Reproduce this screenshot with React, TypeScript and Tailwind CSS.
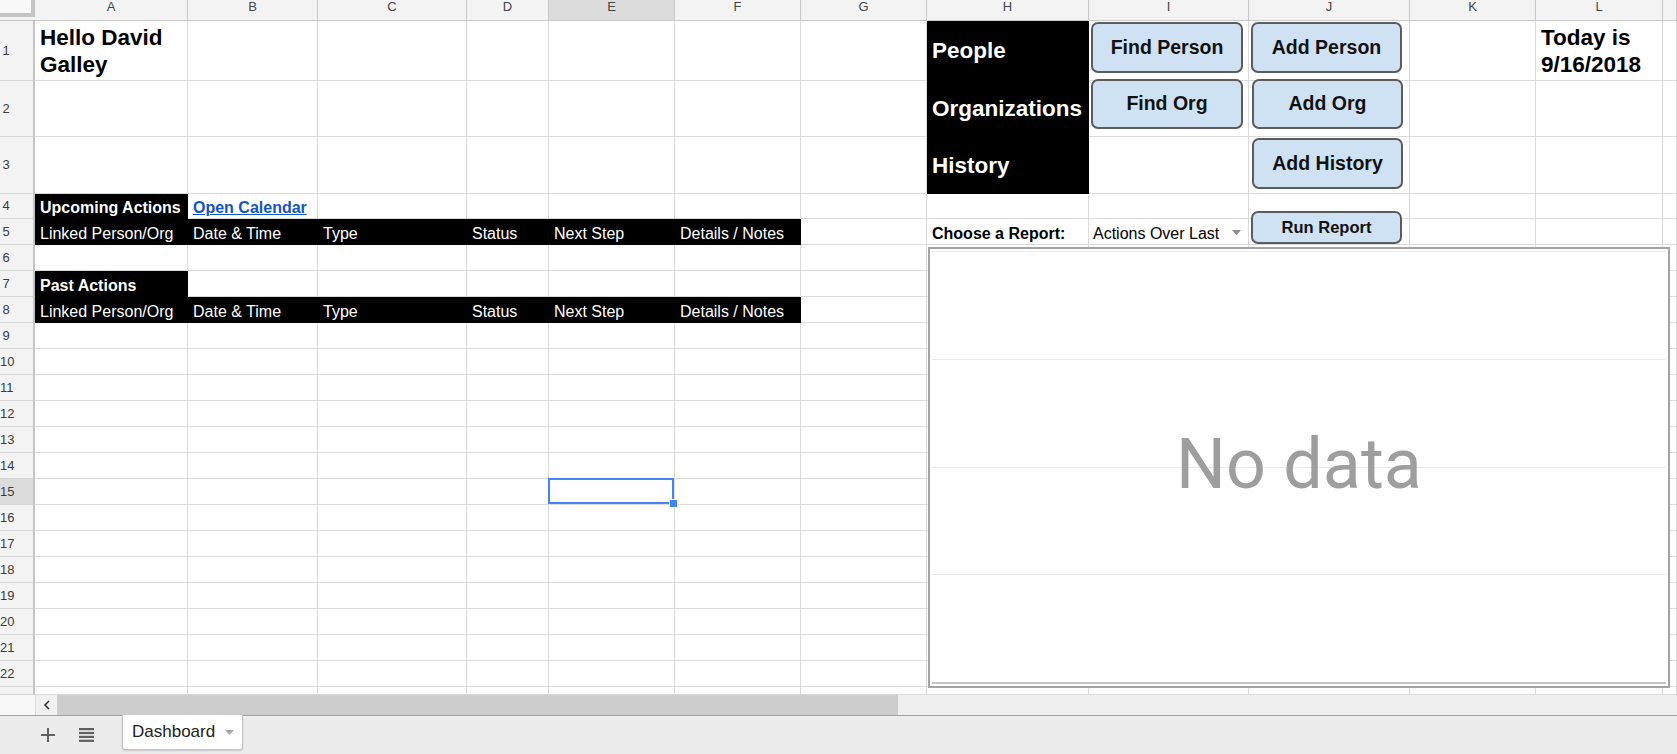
import React from 'react';

type Kind = 'plain' | 'black' | 'blackBold' | 'big' | 'side' | 'link' | 'bold' | 'select';

interface CellDef {
  kind: Kind;
  text?: React.ReactNode;
}

const LETTERS = ['', 'A', 'B', 'C', 'D', 'E', 'F', 'G', 'H', 'I', 'J', 'K', 'L', ''];
const HEADINGS = ['Linked Person/Org', 'Date & Time', 'Type', 'Status', 'Next Step', 'Details / Notes'];

const cells: Record<string, CellDef> = {
  '1-1': { kind: 'big', text: <>Hello David<br />Galley</> },
  '1-8': { kind: 'side', text: 'People' },
  '2-8': { kind: 'side', text: 'Organizations' },
  '3-8': { kind: 'side', text: 'History' },
  '1-12': { kind: 'big', text: <>Today is<br />9/16/2018</> },
  '4-1': { kind: 'blackBold', text: 'Upcoming Actions' },
  '4-2': { kind: 'link', text: 'Open Calendar' },
  '7-1': { kind: 'blackBold', text: 'Past Actions' },
  '5-8': { kind: 'bold', text: 'Choose a Report:' },
  '5-9': { kind: 'select', text: 'Actions Over Last' },
};
HEADINGS.forEach((h, i) => {
  cells[`5-${i + 1}`] = { kind: 'black', text: h };
  cells[`8-${i + 1}`] = { kind: 'black', text: h };
});

const kindClass: Record<Kind, string> = {
  plain: 'border-[#dadada] bg-white',
  black: 'border-black bg-black text-white items-end px-[5px] pb-[2px] text-[16px] leading-[16px]',
  blackBold: 'border-black bg-black text-white items-end px-[5px] pb-[2px] text-[16px] leading-[16px] font-bold',
  big: 'border-[#dadada] bg-white text-black items-end px-[5px] pb-[2px] text-[22.5px] leading-[27px] font-bold',
  side: 'border-black bg-black text-white items-center px-[5px] pt-[2px] text-[22.5px] leading-none font-bold',
  link: 'border-[#dadada] bg-white text-[#1155cc] underline items-end px-[5px] pb-[2px] text-[16px] leading-[16px] font-bold',
  bold: 'border-[#dadada] bg-white text-black items-end px-[5px] pb-[2px] text-[16px] leading-[16px] font-bold',
  select: 'border-[#dadada] bg-white text-black items-end justify-between pl-[4px] pr-[7px] pb-[2px] text-[16px] leading-[16px]',
};

const buttons = [
  { label: 'Find Person', cls: 'left-[1091px] top-[22px] h-[51px] w-[152px] text-[19.5px]' },
  { label: 'Add Person', cls: 'left-[1251px] top-[22px] h-[51px] w-[151px] text-[19.5px]' },
  { label: 'Find Org', cls: 'left-[1091px] top-[79px] h-[50px] w-[152px] text-[19.5px]' },
  { label: 'Add Org', cls: 'left-[1252px] top-[79px] h-[50px] w-[151px] text-[19.5px]' },
  { label: 'Add History', cls: 'left-[1252px] top-[138px] h-[51px] w-[151px] text-[19.5px]' },
  { label: 'Run Report', cls: 'left-[1251px] top-[211px] h-[33px] w-[151px] text-[16.5px]' },
];

function GridCell({ r, c }: { r: number; c: number }) {
  if (r === 0 && c === 0) {
    return (
      <div className="border-b border-[#c4c4c4] bg-[#f3f3f3]">
        <div className="h-[17px] w-[35px] border-r-4 border-b-4 border-[#c4c4c4] bg-[#f8f8f8]" />
      </div>
    );
  }
  if (r === 0) {
    return (
      <div
        className={`border-r border-b border-[#c8c8c8] text-center text-[13px] leading-[13px] text-[#444] ${
          c === 5 ? 'bg-[#dcdcdc]' : 'bg-[#f3f3f3]'
        }`}
      >
        {LETTERS[c]}
      </div>
    );
  }
  if (c === 0) {
    return (
      <div
        className={`flex items-center border-r-2 border-b border-r-[#c4c4c4] border-b-[#d6d6d6] text-[13px] text-[#3c3c3c] ${
          r === 15 ? 'bg-[#dcdcdc]' : 'bg-[#f3f3f3]'
        }`}
      >
        {r <= 22 && <span className="w-[12px] text-center">{r}</span>}
      </div>
    );
  }

  const def = cells[`${r}-${c}`] ?? { kind: 'plain' as Kind };
  return (
    <div className={`relative flex whitespace-nowrap border-r border-b ${kindClass[def.kind]}`}>
      {def.kind === 'select' ? (
        <>
          <span>{def.text}</span>
          <svg width="9" height="5" viewBox="0 0 9 5" className="mb-[7px]">
            <polygon points="0,0 9,0 4.5,5" fill="#8a8a8a" />
          </svg>
        </>
      ) : (
        <span>{def.text}</span>
      )}
      {r === 15 && c === 5 && (
        <>
          <div className="absolute -top-px -left-px right-0 bottom-0 z-10 border-2 border-[#4285f4]" />
          <div className="absolute -right-[4px] -bottom-[4px] z-10 h-[9px] w-[9px] border border-white bg-[#4285f4]" />
        </>
      )}
    </div>
  );
}

function Chart() {
  return (
    <div className="absolute left-[928px] top-[247px] h-[441px] w-[742px] border-2 border-[#a3a3a3] bg-white p-[2px]">
      <div className="flex h-full flex-col justify-between">
        <div className="h-px bg-[#ebebeb]" />
        <div className="h-px bg-[#ebebeb]" />
        <div className="h-px bg-[#ebebeb]" />
        <div className="h-px bg-[#ebebeb]" />
        <div className="h-[2px] bg-[#c4c4c4]" />
      </div>
      <div className="absolute inset-0 flex items-center justify-center pb-[7px] font-['Roboto',sans-serif] text-[70px] leading-none text-[#9e9e9e]">
        No data
      </div>
    </div>
  );
}

function Scrollbar() {
  return (
    <div className="flex h-[20px] shrink-0 bg-[#efefef]">
      <div className="w-[36px] border-r border-[#dcdcdc] bg-[#f8f8f8]" />
      <div className="flex w-[21px] items-center justify-center bg-[#f1f1f1]">
        <svg width="8" height="10" viewBox="0 0 8 10">
          <path d="M6 1 L2 5 L6 9" fill="none" stroke="#333" strokeWidth="1.6" />
        </svg>
      </div>
      <div className="w-[841px] bg-[#cdcdcd]" />
      <div className="flex-1" />
    </div>
  );
}

function TabBar() {
  return (
    <div className="flex h-[39px] shrink-0 items-center border-t border-[#a3a3a3] bg-[#ececec] pl-[41px]">
      <svg width="14" height="14" viewBox="0 0 14 14">
        <path d="M7 0 V14 M0 7 H14" stroke="#5f5f5f" strokeWidth="2" />
      </svg>
      <svg width="15" height="14" viewBox="0 0 15 14" className="ml-[24px]">
        <rect x="0" y="0" width="15" height="2.2" fill="#5f5f5f" />
        <rect x="0" y="3.9" width="15" height="2.2" fill="#5f5f5f" />
        <rect x="0" y="7.8" width="15" height="2.2" fill="#5f5f5f" />
        <rect x="0" y="11.7" width="15" height="2.2" fill="#5f5f5f" />
      </svg>
      <div className="-mt-px ml-[28px] flex h-[35px] w-[121px] items-center self-start rounded-b-[3px] border border-t-0 border-[#c4c4c4] bg-white pl-[9px] shadow-[0_1px_2px_rgba(0,0,0,0.15)]">
        <span className="text-[17px] text-[#222]">Dashboard</span>
        <svg width="9" height="5" viewBox="0 0 9 5" className="ml-[10px]">
          <polygon points="0,0 9,0 4.5,5" fill="#a8a8a8" />
        </svg>
      </div>
    </div>
  );
}

export default function App() {
  const rows = Array.from({ length: 24 }, (_, r) => r);
  const cols = Array.from({ length: 14 }, (_, c) => c);

  return (
    <div className="flex h-[754px] w-full flex-col overflow-hidden bg-white font-['Liberation_Sans',Arial,sans-serif]">
      <div className="relative h-[695px] shrink-0 overflow-hidden">
        <div className="grid h-full grid-cols-[35px_153px_130px_149px_82px_126px_126px_126px_162px_160px_161px_126px_127px_1fr] grid-rows-[21px_60px_56px_57px_25px_repeat(18,26px)_1fr]">
          {rows.map((r) => cols.map((c) => <GridCell key={`${r}-${c}`} r={r} c={c} />))}
        </div>

        {buttons.map((b) => (
          <div
            key={b.label}
            className={`absolute flex items-center justify-center rounded-[7px] border-2 border-[#5c5c5c] bg-[#cfe2f3] font-bold text-[#111] ${b.cls}`}
          >
            {b.label}
          </div>
        ))}

        <Chart />
      </div>
      <Scrollbar />
      <TabBar />
    </div>
  );
}
